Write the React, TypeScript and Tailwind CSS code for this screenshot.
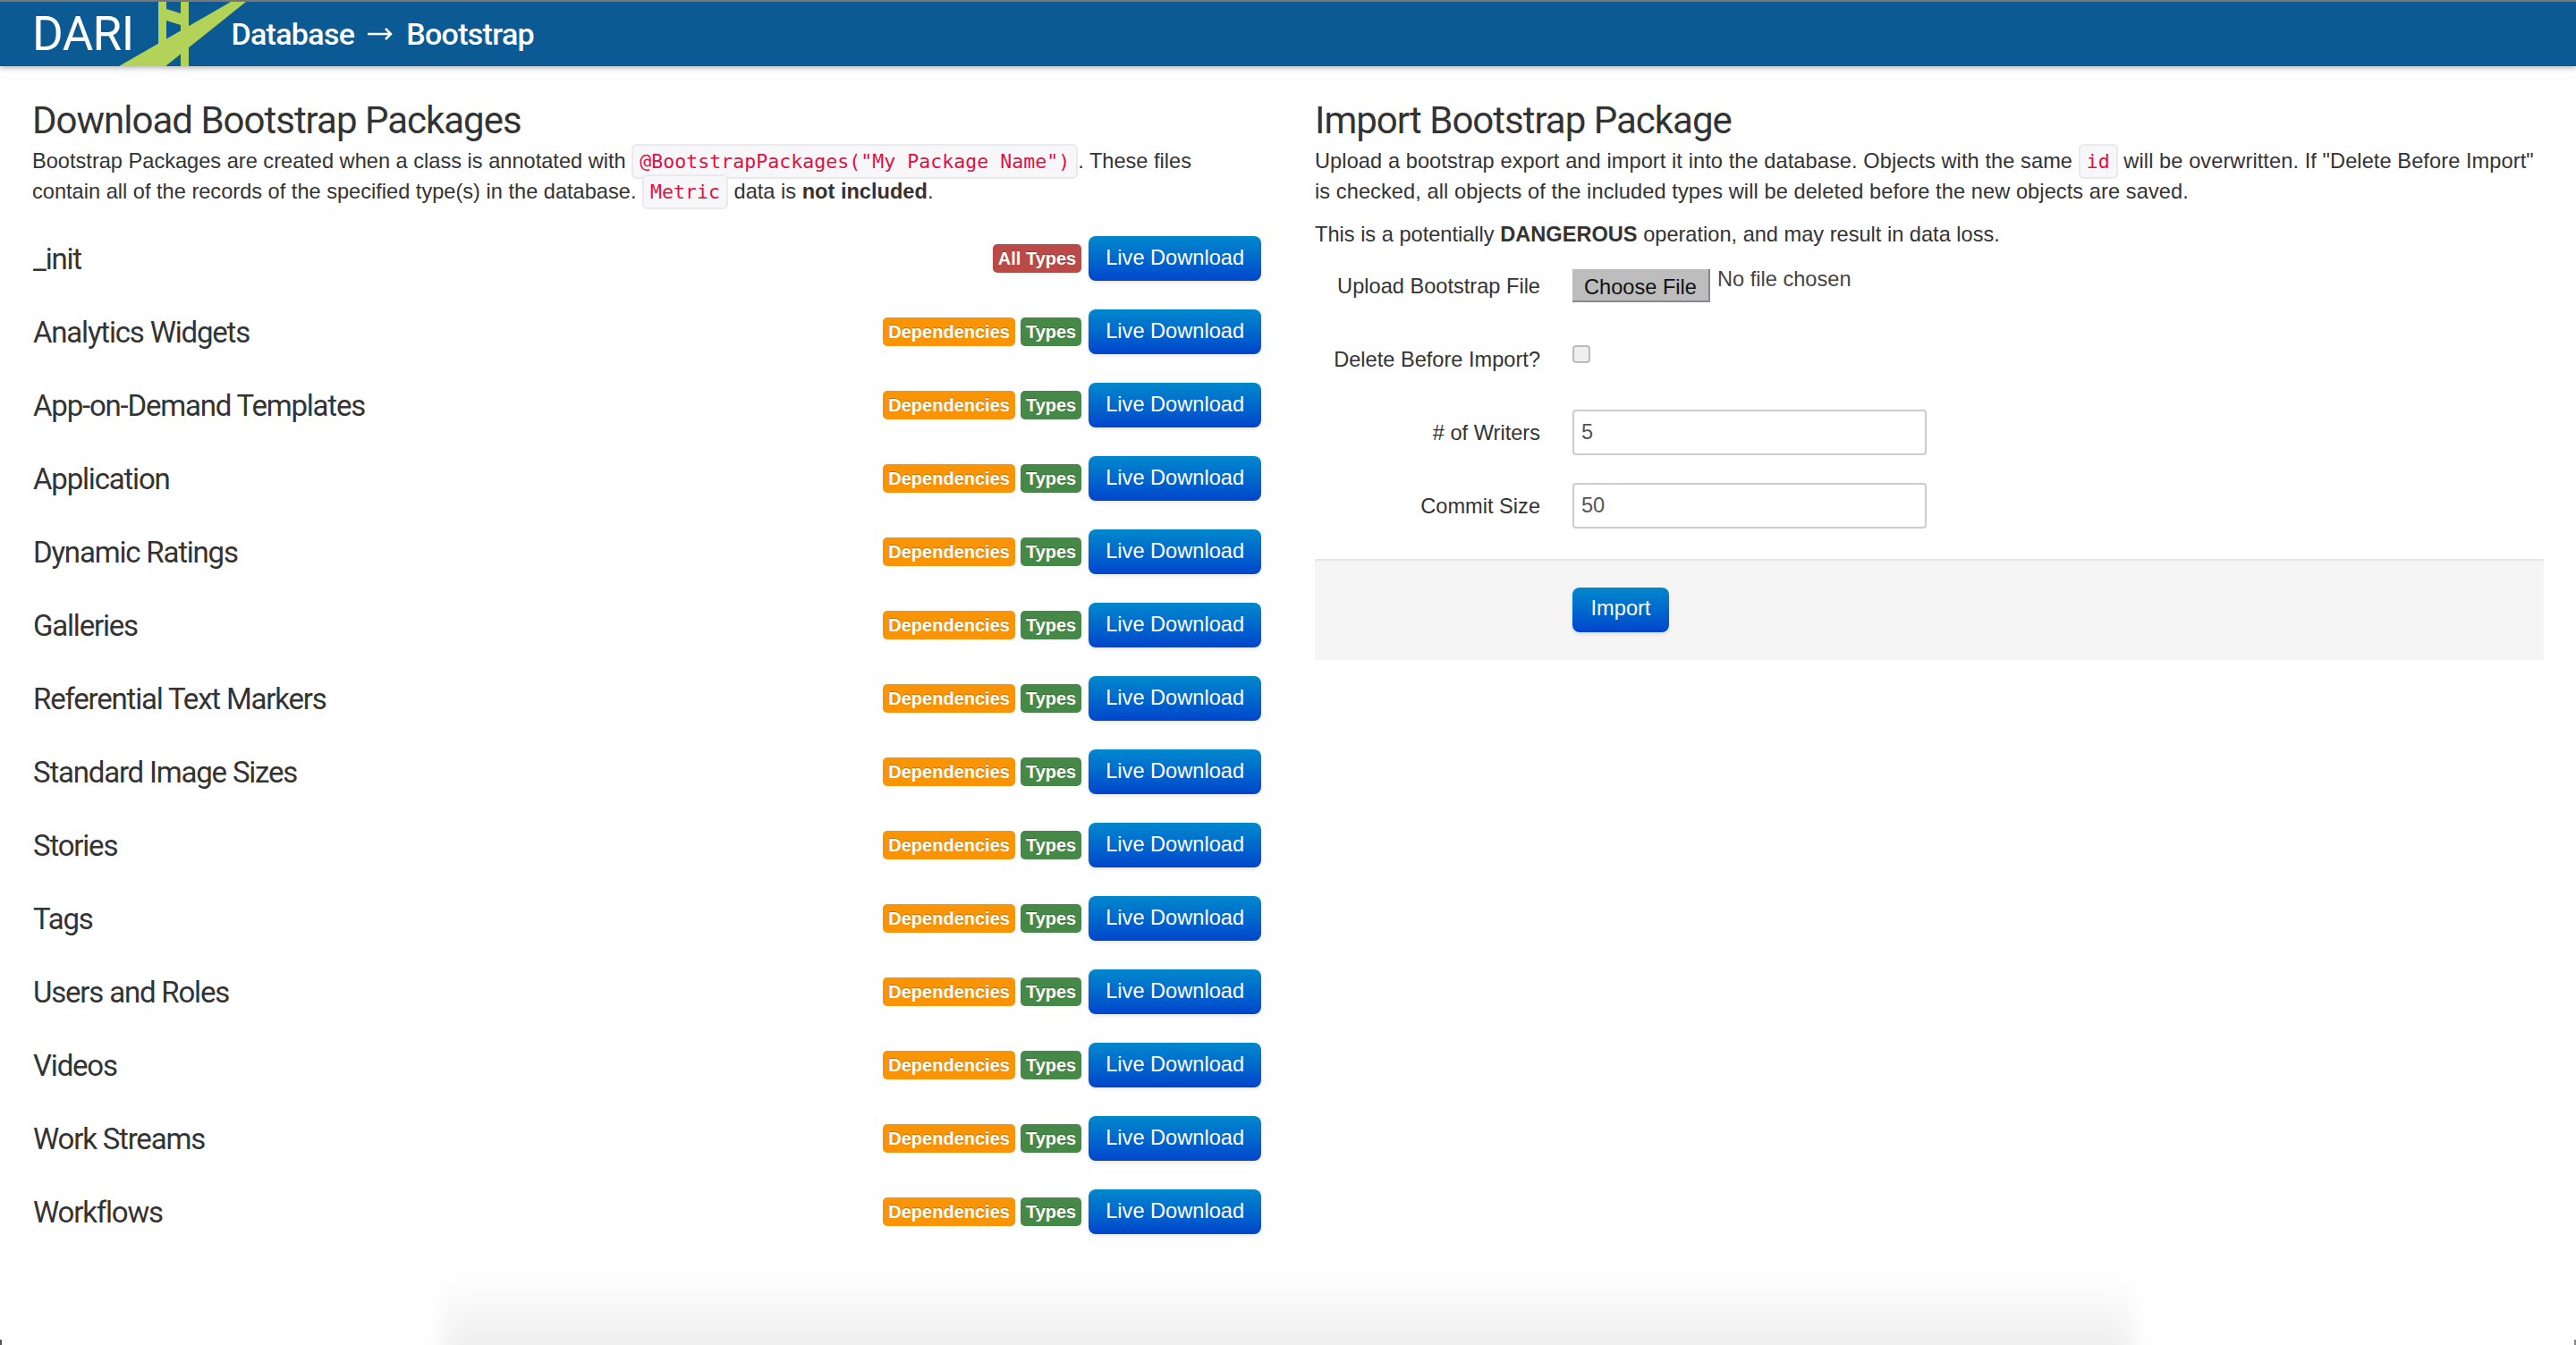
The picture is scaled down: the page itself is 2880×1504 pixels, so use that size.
import React from 'react';

const packages = [
  'Analytics Widgets',
  'App-on-Demand Templates',
  'Application',
  'Dynamic Ratings',
  'Galleries',
  'Referential Text Markers',
  'Standard Image Sizes',
  'Stories',
  'Tags',
  'Users and Roles',
  'Videos',
  'Work Streams',
  'Workflows',
];

function Code({ children }: { children: React.ReactNode }) {
  return (
    <code className="rounded-md border-2 border-[#e9e9ef] bg-[#f7f7f9] px-[7px] py-[5px] font-['DejaVu_Sans_Mono',monospace] text-[21.6px] leading-none tracking-normal text-[#dd1144]">
      {children}
    </code>
  );
}

function Label({ color, children }: { color: string; children: React.ReactNode }) {
  return (
    <span className={`flex h-8 items-center rounded-[5px] px-[6px] pb-px text-[20px] font-bold text-white [text-shadow:0_-1px_0_rgba(0,0,0,0.25)] ${color}`}>
      {children}
    </span>
  );
}

function BlueButton({ children }: { children: React.ReactNode }) {
  return (
    <button className="h-[50px] w-full rounded-lg bg-gradient-to-b from-[#0088cc] to-[#0044cc] px-[19px] pb-[3px] text-[23.6px] text-white shadow-[0_2px_4px_rgba(0,0,0,0.1)]">
      {children}
    </button>
  );
}

function Row({ name, all }: { name: string; all?: boolean }) {
  return (
    <div className="flex h-[50px] items-center justify-between">
      <span className="pl-px pt-[2px] font-['Roboto',sans-serif] text-[33px] tracking-[-1.2px] text-[#333]">{name}</span>
      <div className="flex items-center">
        {all ? (
          <Label color="bg-[#b94a48]">All Types</Label>
        ) : (
          <div className="flex gap-[6px]">
            <Label color="bg-[#f89406]">Dependencies</Label>
            <Label color="bg-[#468847]">Types</Label>
          </div>
        )}
        <div className="ml-2">
          <BlueButton>Live Download</BlueButton>
        </div>
      </div>
    </div>
  );
}

function FormRow({ label, children }: { label: string; children: React.ReactNode }) {
  return (
    <div className="flex h-[51px] items-center">
      <label className="w-[252px] text-right">{label}</label>
      <div className="ml-9">{children}</div>
    </div>
  );
}

export default function App() {
  return (
    <div className="relative h-[1504px] overflow-hidden bg-white font-['Liberation_Sans',sans-serif] text-[23.6px] leading-[34px] text-[#333]">
      <header className="flex h-[74px] items-center border-t-2 border-[#777] bg-[#0c5a94] pl-9 font-['Roboto',sans-serif] text-white shadow-[0_2px_6px_rgba(0,0,0,0.3)]">
        <span className="text-[53px] tracking-[-0.6px]">DARI</span>
        <svg className="absolute left-0 top-[2px]" width="290" height="72" viewBox="0 2 290 72">
          <path d="M177 2h9v8l16 5V2h9v72h-9V35l-16 8v31h-9zM186 23v20l16-8v-7z" fill="#b2d357" fillRule="evenodd" />
          <path d="M258 2h17L185 74h-52z" fill="#b2d357" />
        </svg>
        <div className="ml-[109px] flex items-center text-[34px] font-medium tracking-[-0.7px]">
          <span>Database</span>
          <svg className="mx-[15px]" width="28" height="14" viewBox="0 0 28 14">
            <path d="M0 7h26M20 1l6 6-6 6" fill="none" stroke="#fff" strokeWidth="2.5" />
          </svg>
          <span>Bootstrap</span>
        </div>
      </header>

      <main className="grid grid-cols-2 gap-[60px] px-9 pt-[36px]">
        <section>
          <h1 className="font-['Roboto',sans-serif] text-[42px] leading-[50px] tracking-[-1px]">Download Bootstrap Packages</h1>
          <p className="mt-[3px]">
            Bootstrap Packages are created when a class is annotated with <Code>@BootstrapPackages("My Package Name")</Code>. These files contain all of the records of the specified type(s) in the database. <Code>Metric</Code> data is <b>not included</b>.
          </p>
          <div className="mt-[33px] flex flex-col gap-8">
            <Row name="_init" all />
            {packages.map((p) => (
              <Row key={p} name={p} />
            ))}
          </div>
        </section>

        <section>
          <h1 className="font-['Roboto',sans-serif] text-[42px] leading-[50px] tracking-[-1px]">Import Bootstrap Package</h1>
          <p className="mt-[3px] tracking-[0.08px]">
            Upload a bootstrap export and import it into the database. Objects with the same <Code>id</Code> will be overwritten. If "Delete Before Import" is checked, all objects of the included types will be deleted before the new objects are saved.
          </p>
          <p className="mt-[14px]">
            This is a potentially <b>DANGEROUS</b> operation, and may result in data loss.
          </p>
          <div className="mt-[15px] flex flex-col gap-[31px]">
            <FormRow label="Upload Bootstrap File">
              <div className="flex items-start">
                <span className="flex h-[37px] w-[154px] items-center justify-center border-r-2 border-b-2 border-[#888] bg-[#bdbdbd] pt-[5px] text-[#111]">Choose File</span>
                <span className="ml-2 -mt-[6px] text-[#444]">No file chosen</span>
              </div>
            </FormRow>
            <FormRow label="Delete Before Import?">
              <input type="checkbox" className="mb-3 block h-5 w-5 appearance-none rounded border-2 border-[#bbb] bg-[#eee]" />
            </FormRow>
            <FormRow label="# of Writers">
              <input readOnly value="5" className="h-[51px] w-[396px] rounded border-2 border-[#ccc] px-2 text-[#555]" />
            </FormRow>
            <FormRow label="Commit Size">
              <input readOnly value="50" className="h-[51px] w-[396px] rounded border-2 border-[#ccc] px-2 text-[#555]" />
            </FormRow>
          </div>
          <div className="mt-[34px] flex h-[113px] items-center border-t-2 border-[#e5e5e5] bg-[#f5f5f5] pb-[2px] pl-[288px]">
            <div className="w-[108px]">
              <BlueButton>Import</BlueButton>
            </div>
          </div>
        </section>
      </main>

      {/* faint shadow of the window behind */}
      <div className="absolute bottom-[-20px] left-[495px] h-[100px] w-[1890px] bg-gradient-to-t from-[#ebebeb] to-transparent blur-[12px]" />
      {/* window corners */}
      <div className="absolute bottom-0 left-0 h-[6px] w-[2px] bg-[#555]" />
      <div className="absolute bottom-0 right-0 h-[6px] w-[2px] bg-[#888]" />
    </div>
  );
}
